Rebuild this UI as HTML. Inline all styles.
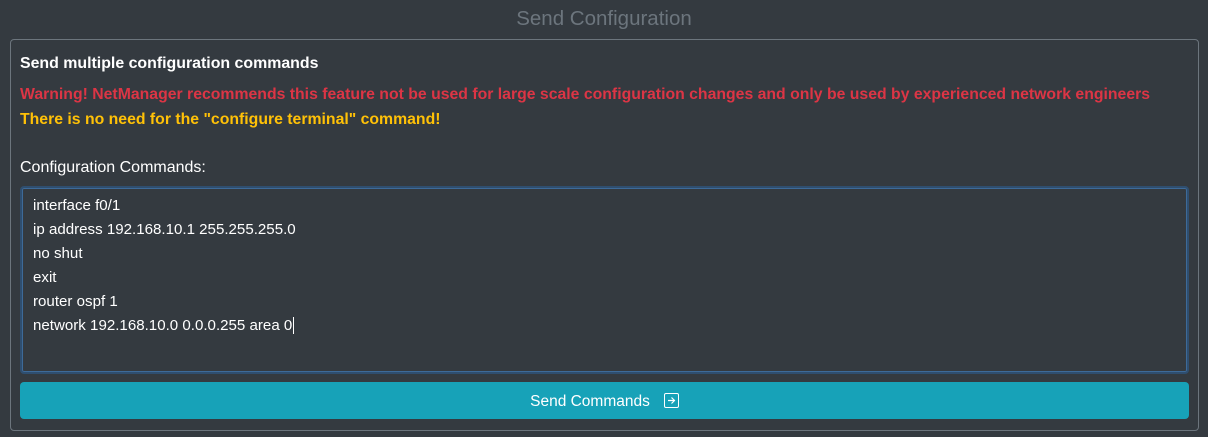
<!DOCTYPE html>
<html><head><meta charset="utf-8"><style>
html,body{margin:0;padding:0;background:#343a40;width:1208px;height:437px;overflow:hidden;font-family:"Liberation Sans",sans-serif;}
.t{position:absolute;left:0;width:1208px;top:7px;text-align:center;color:#6c757d;font-size:20.5px;}
.card{position:absolute;left:10px;top:39px;width:1187px;height:390px;border:1px solid #6c757d;border-radius:4px;}
.a{position:absolute;left:20px;white-space:nowrap;font-size:16px;}
.ta{position:absolute;left:20px;top:186px;width:1165px;height:184px;border:2px solid #2f4e6f;border-radius:4px;box-shadow:0 0 0 1px #3d6a99 inset;}
.ln{position:absolute;left:33px;color:#fff;font-size:15.1px;white-space:nowrap}
.btn{position:absolute;left:20px;top:382px;width:1169px;height:37px;background:#17a2b8;border-radius:4px;color:#fff;font-size:15.5px;text-align:center;line-height:39px;}
.ic{display:inline-block;width:13px;height:13px;border:1px solid #fff;border-radius:2px;vertical-align:-2px;margin-left:14px;position:relative}
</style></head><body>
<div class="t">Send Configuration</div>
<div class="card"></div>
<div class="a" style="top:55px;color:#fff;font-weight:bold;font-size:15.9px">Send multiple configuration commands</div>
<div class="a" style="top:86px;color:#dc3545;font-weight:bold;font-size:15.8px">Warning! NetManager recommends this feature not be used for large scale configuration changes and only be used by experienced network engineers</div>
<div class="a" style="top:111px;color:#ffc107;font-weight:bold;font-size:15.8px">There is no need for the "configure terminal" command!</div>
<div class="a" style="top:159px;color:#fff">Configuration Commands:</div>
<div class="ta"></div>
<div class="ln" style="top:197px">interface f0/1</div>
<div class="ln" style="top:221px">ip address 192.168.10.1 255.255.255.0</div>
<div class="ln" style="top:245px">no shut</div>
<div class="ln" style="top:269px">exit</div>
<div class="ln" style="top:293px">router ospf 1</div>
<div class="ln" style="top:317px">network 192.168.10.0 0.0.0.255 area 0<span style="border-left:1px solid #fff;margin-left:1px"></span></div>
<div class="btn">Send Commands<span class="ic"><svg width="13" height="13" viewBox="0 0 13 13" style="position:absolute;left:0;top:0"><path d="M3 6.5H9.5M6.5 3.5L9.5 6.5L6.5 9.5" stroke="#fff" stroke-width="1.2" fill="none"/></svg></span></div>
</body></html>
